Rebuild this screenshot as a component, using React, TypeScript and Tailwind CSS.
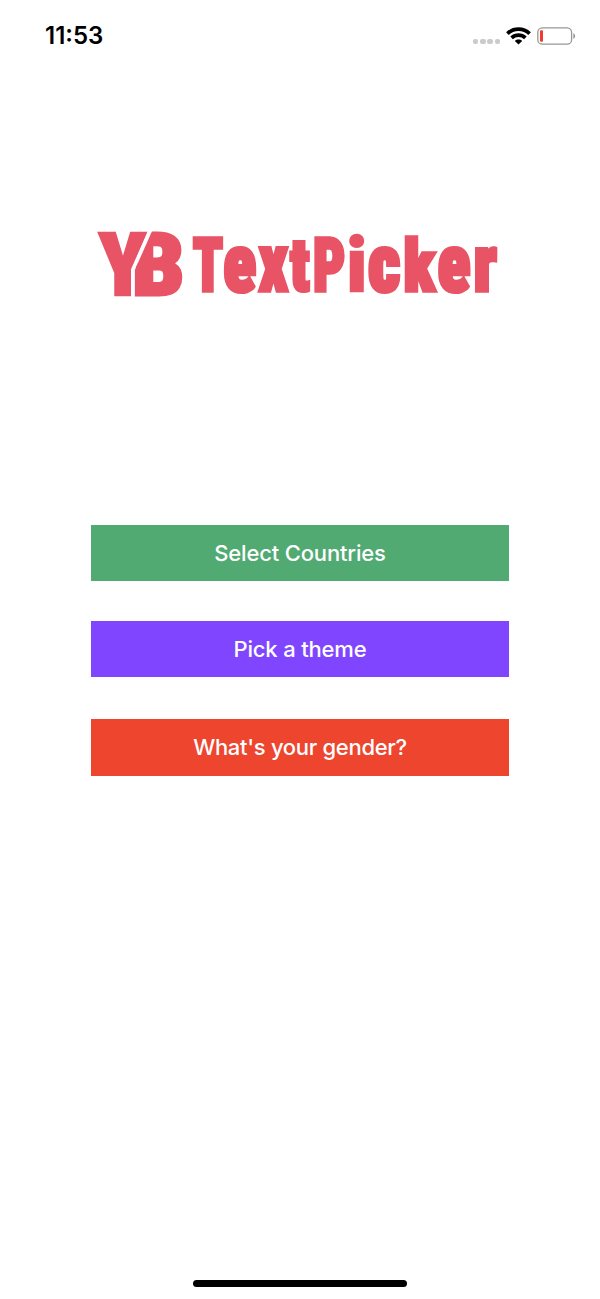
type Glyph = { char: string; x: number; width: number; size: number; stroke: number };

const wordmark: Glyph[] = [
  { char: 'T', x: 192.8, width: 30.4, size: 74.5, stroke: 3.6 },
  { char: 'e', x: 223.5, width: 32.5, size: 79.5, stroke: 4.2 },
  { char: 'x', x: 258.5, width: 29.5, size: 81, stroke: 3.4 },
  { char: 't', x: 289.8, width: 20, size: 75, stroke: 3.2 },
  { char: 'P', x: 313, width: 32.5, size: 74.5, stroke: 3.6 },
  { char: 'i', x: 347.2, width: 19, size: 74, stroke: 2.4 },
  { char: 'c', x: 368.3, width: 32, size: 79.5, stroke: 4.2 },
  { char: 'k', x: 403.6, width: 31.5, size: 71.5, stroke: 3.6 },
  { char: 'e', x: 437.8, width: 32.5, size: 79.5, stroke: 4.2 },
  { char: 'r', x: 473.4, width: 23.5, size: 80, stroke: 3.6 },
];

function Logo() {
  return (
    <svg
      width="420"
      height="90"
      viewBox="90 220 420 90"
      fill="#e85466"
      stroke="#e85466"
      className="font-['Roboto',sans-serif] font-black [font-stretch:75%]"
    >
      <defs>
        <clipPath id="y-side">
          <path d="M90 220H152.5L131 269V310H90Z" />
        </clipPath>
        <clipPath id="b-side">
          <path d="M157 220L134.8 270V310H200V220Z" />
        </clipPath>
      </defs>
      <g clipPath="url(#y-side)" strokeWidth="2.4">
        <text x="98.4" y="295.2" fontSize="88" textLength="49" lengthAdjust="spacingAndGlyphs">
          Y
        </text>
      </g>
      <g clipPath="url(#b-side)" strokeWidth="3.2">
        <text x="131.5" y="294.8" fontSize="87" textLength="53" lengthAdjust="spacingAndGlyphs">
          B
        </text>
      </g>
      <text y="290.7">
        {wordmark.map((g, i) => (
          <tspan
            key={i}
            x={g.x}
            fontSize={g.size}
            strokeWidth={g.stroke}
            textLength={g.width}
            lengthAdjust="spacingAndGlyphs"
          >
            {g.char}
          </tspan>
        ))}
      </text>
    </svg>
  );
}

function StatusBar() {
  return (
    <header className="flex h-[72px] items-center justify-between pr-[24px] pl-[45px]">
      <span className="text-[24px] font-semibold text-black">11:53</span>
      <div className="flex items-center">
        <div className="mt-[11px] mr-[6px] flex gap-[1.7px]">
          {[0, 1, 2, 3].map((n) => (
            <span key={n} className="size-[5.5px] rounded-[2px] bg-[#cbcbcb]" />
          ))}
        </div>
        <svg width="25" height="18" viewBox="0 0 25 18" fill="none" stroke="#000" strokeWidth="3.7">
          <path d="M1.4 6.6C7.6 0.6 17.4 0.6 23.6 6.6" />
          <path d="M5.6 10.9C9.5 7.2 15.5 7.2 19.4 10.9" />
          <path d="M12.5 17.5L8.8 13.9C10.9 12.1 14.1 12.1 16.2 13.9Z" fill="#000" stroke="none" />
        </svg>
        <svg width="39" height="18" viewBox="0 0 39 18" className="ml-[6px]">
          <rect x="0.8" y="0.8" width="33.8" height="16.4" rx="4.5" fill="none" stroke="#969696" strokeWidth="1.3" />
          <rect x="3" y="3.2" width="3" height="11.6" rx="1" fill="#f23a30" />
          <path d="M36.3 6.2C38.7 7 38.7 11 36.3 11.8Z" fill="#969696" />
        </svg>
      </div>
    </header>
  );
}

export default function App() {
  return (
    <div className="flex h-[1299px] w-[600px] flex-col bg-white font-['Inter',sans-serif]">
      <StatusBar />
      <div className="mt-[148px] ml-[90px]">
        <Logo />
      </div>
      <main className="mt-[215px] flex flex-col px-[91px] text-[22px] font-medium text-white">
        <button className="h-[56px] w-[418px] bg-[#52aa73] tracking-[-0.17px]">Select Countries</button>
        <button className="mt-[39.5px] h-[56.5px] w-[418px] bg-[#8046ff] pt-px tracking-[-0.17px]">Pick a theme</button>
        <button className="mt-[42px] h-[56.5px] w-[418px] bg-[#ee452f] tracking-[-0.3px]">What's your gender?</button>
      </main>
      <div className="mt-auto mb-[12px] h-[7px] w-[214px] self-center rounded-full bg-black" />
    </div>
  );
}
